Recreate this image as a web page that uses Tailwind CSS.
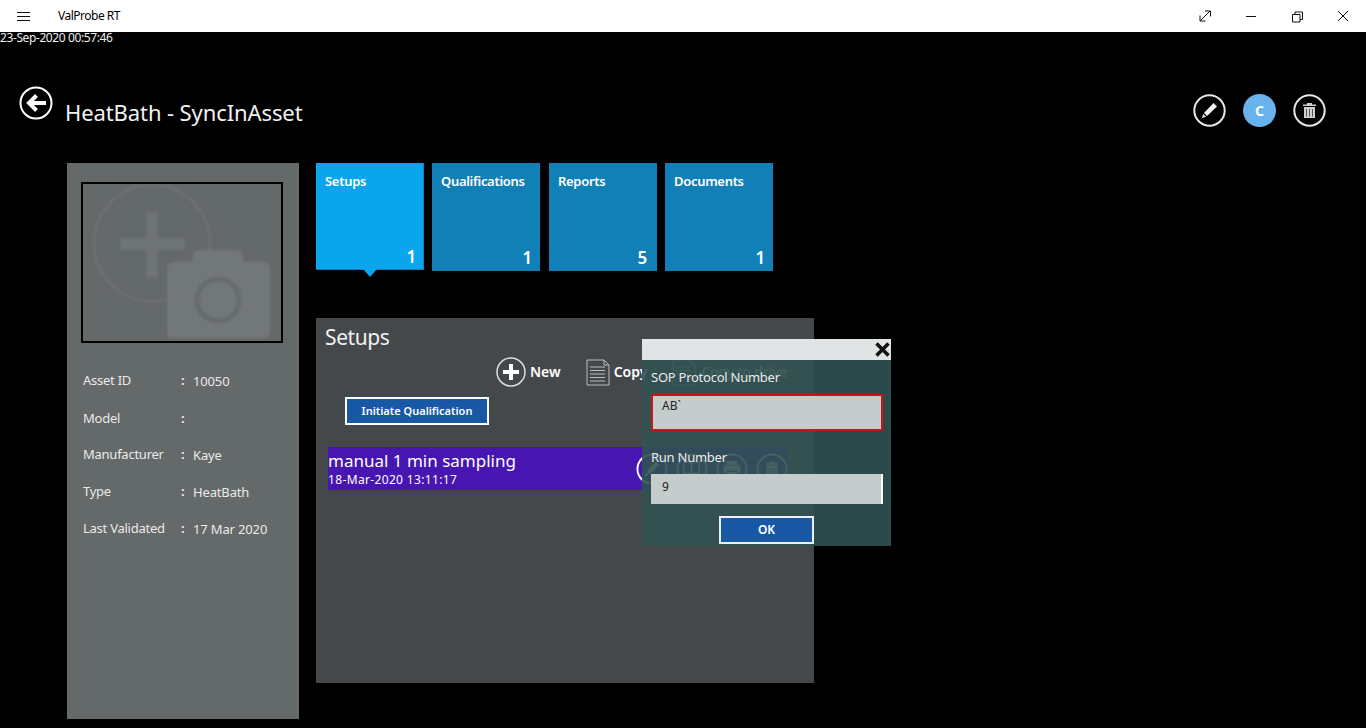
<!DOCTYPE html>
<html lang="en">
  <head>
    <meta charset="UTF-8" />
    <title>ValProbe RT</title>
    <script src="https://cdn.jsdelivr.net/npm/@tailwindcss/browser@4"></script>
  </head>

  <body class="relative w-[1366px] h-[728px] overflow-hidden bg-black text-white font-['Noto_Sans',sans-serif]">
    <!-- Title bar -->
    <header class="flex items-center h-8 bg-white text-black">
      <svg class="ml-[17px] w-[13px] h-[11px]" viewBox="0 0 13 11" fill="none" stroke="#111" stroke-width="1">
        <path d="M0 1.500h13M0 5.500h13M0 9.500h13" />
      </svg>
      <span class="ml-[28px] text-[12px] tracking-[-0.5px]">ValProbe RT</span>
      <div class="ml-auto flex items-center h-full">
        <svg class="w-[46px] h-8" viewBox="0 0 46 32" fill="none" stroke="#111" stroke-width="1">
          <path d="M18 21 28 11M23 11h5.500v5.500M18 15.500V21h5.500" />
        </svg>
        <svg class="w-[46px] h-8" viewBox="0 0 46 32" fill="none" stroke="#111" stroke-width="1">
          <path d="M18 16.500h10" />
        </svg>
        <svg class="w-[46px] h-8" viewBox="0 0 46 32" fill="none" stroke="#111" stroke-width="1">
          <path d="M18.500 14.500h7.500v7.500h-7.500zM21 14.500V12h7.500v7.500H26" />
        </svg>
        <svg class="w-[46px] h-8" viewBox="0 0 46 32" fill="none" stroke="#111" stroke-width="1">
          <path d="M18 11 28 21M28 11 18 21" />
        </svg>
      </div>
    </header>

    <div class="-mt-[1px] h-[14px] text-[12px] leading-[14px] tracking-[-0.4px] text-[#eee]">23-Sep-2020 00:57:46</div>

    <!-- Page heading -->
    <div class="flex items-start h-[118px] pt-[41px]">
      <svg class="ml-[19px] w-[34px] h-[34px]" viewBox="0 0 34 34" fill="none">
        <circle cx="17" cy="17" r="15.500" stroke="#fff" stroke-width="2" />
        <path d="M27 17H13" stroke="#fff" stroke-width="4" />
        <path d="M17.500 9.500 10 17l7.500 7.500" stroke="#fff" stroke-width="4" />
      </svg>
      <h1 class="ml-[12px] mt-[11px] text-[22px] leading-[30px] tracking-[-0.1px] text-[#f2f2f2]">HeatBath - SyncInAsset</h1>
      <div class="ml-auto mr-[40px] mt-[8px] flex items-center gap-[17px]">
        <svg class="w-[33px] h-[33px]" viewBox="0 0 33 33" fill="none">
          <circle cx="16.500" cy="16.500" r="15.200" stroke="#e8e8e8" stroke-width="2" />
          <path d="M20.500 9l3.500 3.500-10 9.500-3-3z" fill="#f4f4f4" />
          <path d="M10.200 20l2.800 2.800-4 1.200z" fill="#f4f4f4" />
        </svg>
        <div class="flex items-center justify-center w-[33px] h-[33px] rounded-full bg-[#68b3ec] text-[14px] font-bold">C</div>
        <svg class="w-[33px] h-[33px]" viewBox="0 0 33 33" fill="none">
          <circle cx="16.500" cy="16.500" r="15.200" stroke="#e8e8e8" stroke-width="2" />
          <path d="M10 10.500h13v1.500H10zM14 10.500V9h5v1.500" fill="#d0d0d0" />
          <path d="M11 13h11v11H11z" fill="#d0d0d0" />
          <path d="M13.500 15v7.500M16.500 15v7.500M19.500 15v7.500" stroke="#555" stroke-width="1" />
        </svg>
      </div>
    </div>

    <!-- Content -->
    <main class="flex pl-[67px]">
      <!-- Asset card -->
      <aside class="w-[232px] h-[556px] bg-[#646969] pt-[19px] px-[14px]">
        <div class="w-[202px] h-[161px] border-2 border-black overflow-hidden">
          <svg class="w-full h-full blur-[1px]" viewBox="0 0 198 157" fill="none">
            <circle cx="69" cy="59" r="58" stroke="#6c7171" stroke-width="3" />
            <path d="M69 28v65M37 60h65" stroke="#6f7474" stroke-width="11" />
            <path d="M88 154a4 4 0 0 1-4-4V84a6 6 0 0 1 6-6h20V72a6 6 0 0 1 6-6h38a6 6 0 0 1 6 6v6h21a6 6 0 0 1 6 6v64a6 6 0 0 1-6 6z" fill="#727777" />
            <circle cx="135" cy="116" r="21" stroke="#666b6b" stroke-width="5" />
          </svg>
        </div>
        <dl class="mt-[28px] ml-[2px] grid grid-cols-[98px_12px_1fr] auto-rows-[37px] text-[13px] leading-[18px] text-[#eaeaea]">
          <dt class="tracking-[-0.25px]">Asset ID</dt><dd class="font-bold">:</dd><dd class="pt-[1px] tracking-[-0.15px]">10050</dd>
          <dt class="pt-[1px] tracking-[-0.25px]">Model</dt><dd class="pt-[1px] font-bold">:</dd><dd></dd>
          <dt class="tracking-[-0.25px]">Manufacturer</dt><dd class="font-bold">:</dd><dd class="pt-[1px] tracking-[-0.15px]">Kaye</dd>
          <dt class="tracking-[-0.25px]">Type</dt><dd class="font-bold">:</dd><dd class="pt-[1px] tracking-[-0.15px]">HeatBath</dd>
          <dt class="tracking-[-0.25px]">Last Validated</dt><dd class="font-bold">:</dd><dd class="pt-[1px] tracking-[-0.15px]">17 Mar 2020</dd>
        </dl>
      </aside>

      <section class="ml-[17px]">
        <!-- Tiles -->
        <nav class="flex h-[155px] text-[13px] font-semibold tracking-[-0.3px]">
          <div class="relative w-[108px] h-[107px] bg-[#0ba5ee] border-b border-r border-[#1080b5]">
            <span class="absolute left-[9px] top-[9px]">Setups</span>
            <span class="absolute right-[7px] bottom-0 text-[17px]">1</span>
            <div class="absolute left-[47px] top-[106px] w-0 h-0 border-x-[7px] border-x-transparent border-t-[8px] border-t-[#0ba5ee]"></div>
          </div>
          <div class="relative ml-[8px] w-[108px] h-[108px] bg-[#1180b6]">
            <span class="absolute left-[9px] top-[9px]">Qualifications</span>
            <span class="absolute right-[8px] bottom-[1px] text-[17px]">1</span>
          </div>
          <div class="relative ml-[9px] w-[108px] h-[108px] bg-[#1180b6]">
            <span class="absolute left-[9px] top-[9px]">Reports</span>
            <span class="absolute right-[10px] bottom-[1px] text-[17px]">5</span>
          </div>
          <div class="relative ml-[8px] w-[108px] h-[108px] bg-[#1180b6]">
            <span class="absolute left-[9px] top-[9px]">Documents</span>
            <span class="absolute right-[8px] bottom-[1px] text-[17px]">1</span>
          </div>
        </nav>

        <!-- Setups panel -->
        <div class="w-[498px] h-[365px] bg-[#45484b] pt-[5px]">
          <h2 class="ml-[9px] text-[21px] leading-[29px] tracking-[-0.4px] text-[#f2f2f2]">Setups</h2>
          <div class="flex items-center h-[30px] mt-[5px] ml-[180px] whitespace-nowrap">
            <svg class="w-[30px] h-[30px] shrink-0" viewBox="0 0 30 30" fill="none">
              <circle cx="15" cy="15" r="14" stroke="#ddd" stroke-width="1.500" />
              <path d="M15 7v16M7 15h16" stroke="#fff" stroke-width="4" />
            </svg>
            <span class="ml-[4px] -mt-[2px] text-[14px] font-semibold">New</span>
            <svg class="ml-[25px] w-[24px] h-[27px] shrink-0" viewBox="0 0 24 27" fill="none" stroke="#bbb" stroke-width="1">
              <path d="M1 1h17l5 5v20H1zM18 1v5h5M4 8h15M4 11.500h15M4 15h15M4 18.500h15M4 22h15" />
            </svg>
            <span class="ml-[4px] -mt-[1px] text-[14px] font-semibold">Copy</span>
            <svg class="ml-[25px] w-[24px] h-[27px] shrink-0" viewBox="0 0 24 27" fill="none" stroke="#bbb" stroke-width="1">
              <path d="M1 1h17l5 5v20H1zM18 1v5h5M4 8h15M4 11.500h15M4 15h15" />
            </svg>
            <span class="ml-[5px] -mt-[1px] text-[14px] font-semibold tracking-[-0.3px] text-[#ddd]">Copy to drive</span>
          </div>
          <button class="block mt-[10px] ml-[29px] w-[144px] h-[28px] bg-[#1858a4] border-2 border-white text-[11px] font-semibold">Initiate Qualification</button>
          <!-- Setup row -->
          <div class="flex items-center mt-[22px] ml-[12px] w-[460px] h-[43px] bg-[#4716b0]">
            <div class="flex-1">
              <div class="text-[17px] leading-[22px]">manual 1 min sampling</div>
              <div class="text-[12px] leading-[16px] tracking-[0.35px]">18-Mar-2020 13:11:17</div>
            </div>
            <div class="flex gap-[8px]">
              <svg class="w-[32px] h-[32px]" viewBox="0 0 33 33" fill="none">
                <circle cx="16.500" cy="16.500" r="15" stroke="#fff" stroke-width="2" />
                <path d="M20.500 9l3.500 3.500-10 9.500-3-3zM10.200 20l2.800 2.800-4 1.200z" fill="#fff" />
              </svg>
              <svg class="w-[32px] h-[32px]" viewBox="0 0 33 33" fill="none">
                <circle cx="16.500" cy="16.500" r="15" stroke="#fff" stroke-width="2" />
                <path d="M8 10c3-1 6-1 8 1 2-2 5-2 8-1v11h-6c-1 0-2 .5-2 1.500 0-1-1-1.500-2-1.500H8zM16 11v11" stroke="#fff" stroke-width="1.500" />
                <circle cx="22.500" cy="22.500" r="2.500" fill="#fff" />
              </svg>
              <svg class="w-[32px] h-[32px]" viewBox="0 0 33 33" fill="none">
                <circle cx="16.500" cy="16.500" r="15" stroke="#fff" stroke-width="2" />
                <path d="M11 8h11v4H11zM8 13h17v8h-3v-3H11v3H8zM12 19.500h9V25h-9z" fill="#fff" />
              </svg>
              <svg class="w-[32px] h-[32px]" viewBox="0 0 33 33" fill="none">
                <circle cx="16.500" cy="16.500" r="15" stroke="#fff" stroke-width="2" />
                <path d="M10 10.500h13v1.500H10zM14 10.500V9h5v1.500M11 13h11v11H11z" fill="#fff" />
                <path d="M13.500 15v7.500M16.500 15v7.500M19.500 15v7.500" stroke="#4716b0" stroke-width="1" />
              </svg>
            </div>
          </div>
        </div>
      </section>
    </main>

    <!-- SOP dialog, lies over the setups panel -->
    <div class="absolute left-[642px] top-[339px] w-[249px] h-[207px] bg-[#315252]/90">
      <div class="flex items-center justify-end h-[21px] bg-[#e0e4e4] pr-[1px]">
        <svg class="w-[15px] h-[15px]" viewBox="0 0 15 15" stroke="#111" stroke-width="3.500">
          <path d="M1.500 1.500l12 12M13.500 1.500l-12 12" />
        </svg>
      </div>
      <div class="px-[9px]">
        <label class="block mt-[8px] text-[13px] leading-[18px] tracking-[-0.25px] text-[#eaeaea]">SOP Protocol Number</label>
        <div class="mt-[8px] w-[232px] h-[37px] border-2 border-[#cc1414] bg-[#c5cdcc] pl-[9px] pt-[1px] text-[12px] leading-[18px] text-[#222]">AB`</div>
        <label class="block mt-[17px] text-[13px] leading-[18px] tracking-[-0.25px] text-[#eaeaea]">Run Number</label>
        <div class="mt-[8px] w-[232px] h-[30px] border-r-2 border-white bg-[#c5cdcc] pl-[11px] pt-[4px] text-[12px] leading-[18px] text-[#222]">9</div>
        <button class="block mx-auto mt-[12px] w-[95px] h-[28px] bg-[#1858a4] border-2 border-[#eef] text-[12px] font-semibold">OK</button>
      </div>
    </div>
  </body>
</html>
